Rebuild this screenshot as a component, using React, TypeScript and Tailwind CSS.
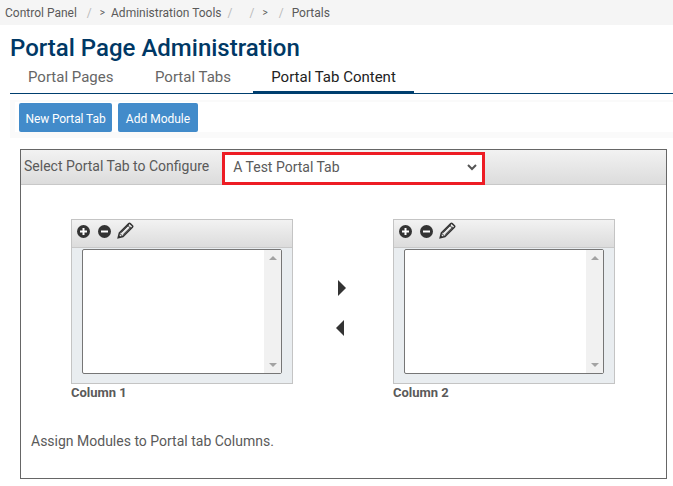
import React from 'react';

function PlusIcon() {
  return (
    <svg viewBox="0 0 13 13" className="w-[13px] h-[13px]">
      <circle cx="6.5" cy="6.5" r="6.5" fill="#333333" />
      <path d="M6.5 3v7M3 6.5h7" stroke="#ffffff" strokeWidth="2" />
    </svg>
  );
}

function MinusIcon() {
  return (
    <svg viewBox="0 0 13 13" className="w-[13px] h-[13px]">
      <circle cx="6.5" cy="6.5" r="6.5" fill="#333333" />
      <path d="M3 6.5h7" stroke="#ffffff" strokeWidth="2" />
    </svg>
  );
}

function PencilIcon() {
  return (
    <svg viewBox="0 0 17 17" className="w-[17px] h-[17px]" fill="none" stroke="#333333">
      <path d="M1.2 15.8l1.2-4.8L11.8 1.6a1 1 0 0 1 1.4 0l2.2 2.2a1 1 0 0 1 0 1.4L6 14.6z" strokeWidth="1.5" />
      <path d="M2.4 11l3.6 3.6M10.4 3l3.6 3.6M4.2 10.6l7.6-7.6M6.2 12.6l7.6-7.6" strokeWidth="1" />
      <path d="M1 16l.7-3 2.3 2.3z" fill="#333333" stroke="none" />
    </svg>
  );
}

function ColumnBox({ label }: { label: string }) {
  return (
    <div className="w-[222px]">
      <div className="h-[165px] border border-[#c4c4c4] bg-[#e9edf0] flex flex-col">
        <div className="h-[28px] shrink-0 flex items-center gap-[8px] pl-[5px] pb-[4px] bg-gradient-to-b from-[#f2f2f2] to-[#dcdcdc] border-b border-[#c8c8c8]">
          <PlusIcon />
          <MinusIcon />
          <div className="-ml-[2px] -mt-[2px]">
            <PencilIcon />
          </div>
        </div>
        <div className="mx-[10px] mt-[1px] h-[125px] bg-white border border-[#767676] rounded-[2px] flex justify-end">
          <div className="w-[17px] bg-[#f1f1f1] flex flex-col items-center justify-between py-[6px]">
            <div className="w-0 h-0 border-x-[4px] border-x-transparent border-b-[4px] border-b-[#a3a3a3]" />
            <div className="w-0 h-0 border-x-[4px] border-x-transparent border-t-[4px] border-t-[#a3a3a3]" />
          </div>
        </div>
      </div>
      <div className="text-[13px] leading-[18px] font-bold text-[#5a5a5a]">{label}</div>
    </div>
  );
}

export default function App() {
  return (
    <div className="w-[673px] h-[486px] overflow-hidden bg-white font-['Roboto',sans-serif]">
      <div className="h-[25px] bg-[#f5f5f5] flex items-center pl-[5px] text-[12px] text-[#5a5a5a] whitespace-nowrap">
        <span>Control Panel</span>
        <span className="ml-[10px] text-[#bbbbbb]">/</span>
        <span className="ml-[8px] text-[10px]">&gt;</span>
        <span className="ml-[6px]">Administration Tools</span>
        <span className="ml-[6px] text-[#bbbbbb]">/</span>
        <span className="ml-[17px] text-[#bbbbbb]">/</span>
        <span className="ml-[8px] text-[10px]">&gt;</span>
        <span className="ml-[11px] text-[#bbbbbb]">/</span>
        <span className="ml-[8px]">Portals</span>
      </div>

      <h1 className="pl-[10px] pt-[9px] h-[40px] text-[24px] leading-[29px] font-medium text-[#003865]">
        Portal Page Administration
      </h1>

      <div className="ml-[10px] h-[29px] flex border-b border-[#003f6f] text-[15px]">
        <div className="w-[122px] pl-[18px] pt-[1px] text-[#666666]">Portal Pages</div>
        <div className="w-[121px] pl-[23px] pt-[1px] text-[#666666]">Portal Tabs</div>
        <div className="w-[161px] h-[29px] text-center pt-[1px] text-[#222222] border-b-[3px] border-[#003f6f]">
          Portal Tab Content
        </div>
      </div>

      <div className="ml-[10px] mt-[6px] h-[38px] bg-[#fafafa] pl-[5px] pt-[2px] pb-[6px]">
        <div className="h-full bg-white pl-[4px] pt-[1px] flex gap-[6px] items-start">
          <button className="h-[29px] w-[93px] pt-[2px] bg-[#428bca] rounded-[2px] text-white text-[12px] tracking-[-0.1px]">New Portal Tab</button>
          <button className="h-[29px] w-[80px] pt-[2px] bg-[#428bca] rounded-[2px] text-white text-[12px]">Add Module</button>
        </div>
      </div>

      <div className="ml-[20px] mt-[11px] w-[647px] h-[330px] border border-[#666666] flex flex-col">
        <div className="h-[35px] shrink-0 flex items-start pl-[3px] bg-gradient-to-b from-[#f2f2f2] to-[#dcdcdc] border-b border-[#c8c8c8]">
          <span className="mt-[8px] text-[14px] leading-[17px] text-[#5a5a5a] whitespace-nowrap">Select Portal Tab to Configure</span>
          <div className="ml-[13px] mt-[2px] w-[263px] h-[33px] bg-white border-[3px] border-[#ed1c24] flex items-center justify-between pl-[8px] pr-[5px] pb-[2px]">
            <span className="text-[14px] text-[#5a5a5a]">A Test Portal Tab</span>
            <svg viewBox="0 0 10 7" className="w-[10px] h-[7px]" fill="none" stroke="#555555" strokeWidth="2">
              <path d="M1 1l4 4 4-4" />
            </svg>
          </div>
        </div>

        <div className="pl-[50px] pt-[34px] flex items-start">
          <ColumnBox label="Column 1" />
          <div className="w-[100px] h-[165px] flex flex-col pl-[43px] pt-[61px]">
            <div className="ml-[2px] w-0 h-0 border-y-[8px] border-y-transparent border-l-[8px] border-l-[#333333]" />
            <div className="mt-[24px] w-0 h-0 border-y-[8px] border-y-transparent border-r-[8px] border-r-[#333333]" />
          </div>
          <ColumnBox label="Column 2" />
        </div>

        <p className="pl-[10px] mt-[31px] text-[14px] leading-[17px] text-[#5a5a5a]">Assign Modules to Portal tab Columns.</p>
      </div>
    </div>
  );
}
